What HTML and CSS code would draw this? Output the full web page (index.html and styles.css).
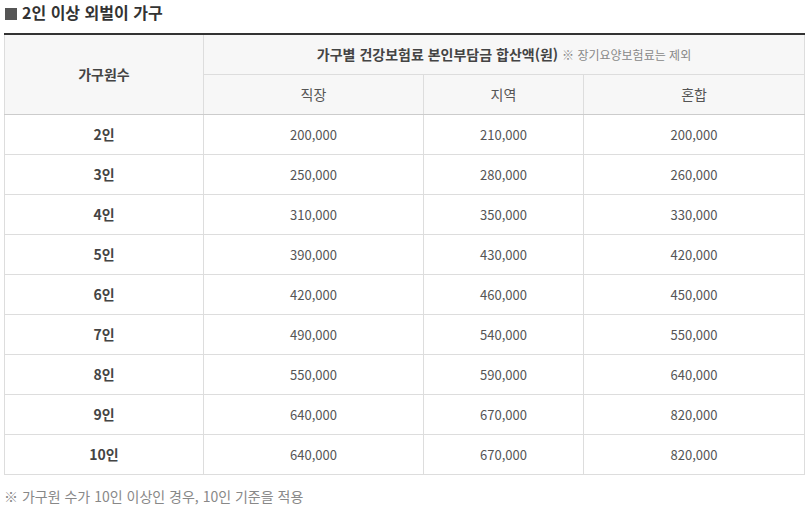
FILE: index.html
```html
<!DOCTYPE html>
<html lang="ko">
<head>
<meta charset="utf-8">
<link rel="stylesheet" href="styles.css">
</head>
<body>
<div class="page">
  <h3 class="title"><span class="sq"></span>2인 이상 외벌이 가구</h3>
  <table class="tbl">
    <colgroup>
      <col class="c1"><col class="c2"><col class="c3"><col class="c4">
    </colgroup>
    <thead>
      <tr class="h1">
        <th rowspan="2" class="th-left">가구원수</th>
        <th colspan="3">가구별 건강보험료 본인부담금 합산액(원) <span class="note">※ 장기요양보험료는 제외</span></th>
      </tr>
      <tr class="h2">
        <th class="sub">직장</th>
        <th class="sub">지역</th>
        <th class="sub">혼합</th>
      </tr>
    </thead>
    <tbody>
      <tr><th>2인</th><td>200,000</td><td>210,000</td><td>200,000</td></tr>
      <tr><th>3인</th><td>250,000</td><td>280,000</td><td>260,000</td></tr>
      <tr><th>4인</th><td>310,000</td><td>350,000</td><td>330,000</td></tr>
      <tr><th>5인</th><td>390,000</td><td>430,000</td><td>420,000</td></tr>
      <tr><th>6인</th><td>420,000</td><td>460,000</td><td>450,000</td></tr>
      <tr><th>7인</th><td>490,000</td><td>540,000</td><td>550,000</td></tr>
      <tr><th>8인</th><td>550,000</td><td>590,000</td><td>640,000</td></tr>
      <tr><th>9인</th><td>640,000</td><td>670,000</td><td>820,000</td></tr>
      <tr><th>10인</th><td>640,000</td><td>670,000</td><td>820,000</td></tr>
    </tbody>
  </table>
  <p class="foot">※ 가구원 수가 10인 이상인 경우, 10인 기준을 적용</p>
</div>
</body>
</html>
```
FILE: styles.css
```css
* { box-sizing: border-box; }
html, body { margin: 0; padding: 0; background: #fff; }
body {
  font-family: "Noto Sans CJK KR", "Noto Sans", sans-serif;
  color: #555;
}
.page { padding: 0 5px 0 4px; }
.title {
  margin: 0;
  height: 34px;
  padding-top: 1px;
  font-size: 16px;
  font-weight: bold;
  color: #333;
  display: flex;
  align-items: flex-start;
  gap: 5px;
  line-height: 22px;
  padding-left: 1px;
}
.sq {
  display: inline-block;
  width: 12px;
  height: 12px;
  background: #555;
  margin-top: 7px;
}
.tbl {
  width: 800px;
  border-collapse: collapse;
  table-layout: fixed;
  border-top: 2px solid #333;
  margin-top: -1px;
}
.c1 { width: 199px; }
.c2 { width: 220px; }
.c3 { width: 160px; }
.c4 { width: 221px; }
.tbl th, .tbl td {
  border: 1px solid #ddd;
  text-align: center;
  height: 40px;
  padding: 0;
  font-size: 13px;
}
.tbl thead th {
  background: #f7f7f7;
  font-size: 14px;
  font-weight: bold;
  color: #444;
}
.tbl thead .sub { font-weight: normal; color: #555; border-top: 1px solid #ccc; }
.tbl thead tr.h2 th { border-bottom: 1px solid #ccc; }
.tbl thead .th-left { border-bottom: 1px solid #ccc; }
.note { font-size: 12px; font-weight: normal; color: #888; }
.tbl tbody th { font-weight: bold; color: #444; font-size: 14px; }
.tbl tbody td { color: #555; }
.foot {
  margin: 11px 0 0;
  font-size: 14px;
  color: #888;
}
```
